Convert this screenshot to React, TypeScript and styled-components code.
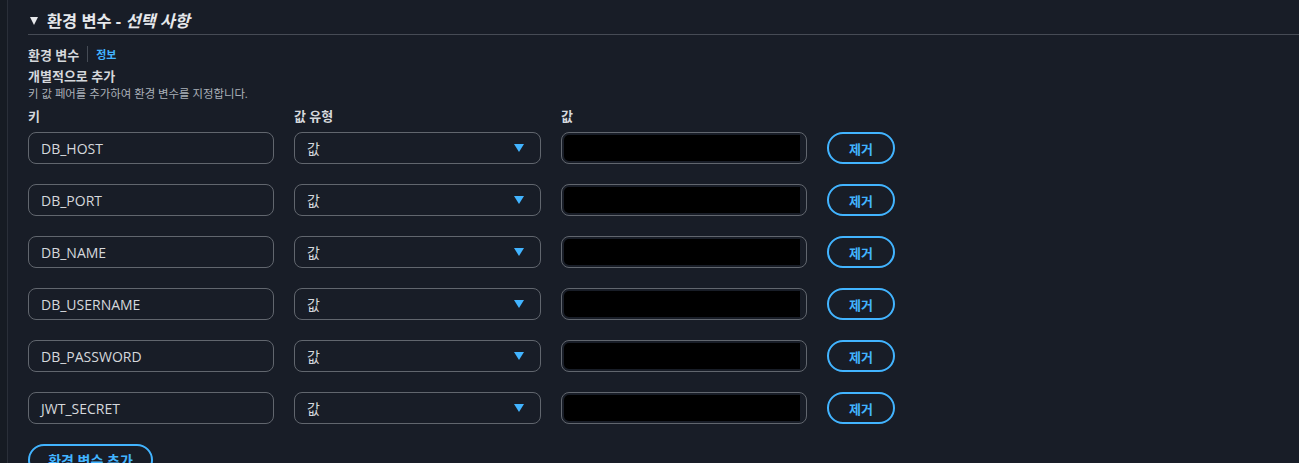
import React from "react";
import styled, { createGlobalStyle } from "styled-components";

const Global = createGlobalStyle`
  html, body { margin: 0; padding: 0; background: #161b23; }
  body { font-family: "Open Sans", "Noto Sans CJK KR", sans-serif; color: #d1d5db; }
  * { box-sizing: border-box; }
`;

const Page = styled.div`
  width: 1299px;
  height: 463px;
  overflow: hidden;
  background: #161b23;
  padding-left: 7px;
`;

const Panel = styled.div`
  height: 100%;
  background: #181d27;
  border-left: 1px solid #2a2f39;
  padding: 9px 0 0 20px;
`;

const Header = styled.div`
  display: flex;
  align-items: center;
  gap: 9px;
  height: 26px;
  padding-left: 2px;
  border-bottom: 1px solid #464b55;
`;

const Caret = styled.span`
  width: 0;
  height: 0;
  border-left: 4.5px solid transparent;
  border-right: 4.5px solid transparent;
  border-top: 8px solid #e6e8eb;
  margin-bottom: 2px;
`;

const Title = styled.h2`
  margin: 0 0 3px;
  font-size: 16.4px;
  font-weight: 700;
  color: #e6e8eb;
  em { font-weight: 700; }
`;

const Body = styled.div`
  padding-top: 9px;
`;

const LabelRow = styled.div`
  display: flex;
  align-items: center;
  height: 20px;
`;

const Label = styled.span`
  font-size: 13px;
  font-weight: 700;
  color: #d5d8dc;
`;

const Sep = styled.span`
  width: 1px;
  height: 16px;
  background: #454b55;
  margin: 0 8px;
`;

const Info = styled.a`
  font-size: 11px;
  font-weight: 700;
  color: #42b4ff;
`;

const SubTitle = styled.div`
  margin-top: 2px;
  font-size: 13px;
  font-weight: 700;
  color: #d5d8dc;
  line-height: 20px;
`;

const Desc = styled.div`
  font-size: 11.4px;
  color: #aab0b8;
  line-height: 16px;
`;

const Grid = styled.div`
  display: grid;
  grid-template-columns: 246px 247px 246px 68px;
  column-gap: 20px;
  row-gap: 20px;
  align-items: center;
  margin-top: 5px;
`;

const ColLabel = styled.div`
  font-size: 13px;
  font-weight: 700;
  color: #d5d8dc;
  line-height: 18px;
  margin-bottom: -13px;
`;

const Field = styled.div`
  height: 32px;
  border: 1px solid #61666e;
  border-radius: 8px;
  display: flex;
  align-items: center;
  padding: 0 12px;
  font-size: 14px;
  color: #d5d8dc;
`;

const SelectField = styled(Field)`
  justify-content: space-between;
`;

const SelArrow = styled.span`
  width: 0;
  height: 0;
  border-left: 5.5px solid transparent;
  border-right: 5.5px solid transparent;
  border-top: 8px solid #42b4ff;
  margin-right: 4px;
`;

const ValueField = styled(Field)`
  padding: 2px 6px 2px 2px;
  align-items: stretch;
`;

const Redact = styled.div`
  flex: 1;
  background: #000;
  border-radius: 5px 0 0 5px;
`;

const PillButton = styled.button`
  height: 32px;
  border: 2px solid #42b4ff;
  border-radius: 20px;
  background: transparent;
  color: #42b4ff;
  font-family: inherit;
  font-size: 13px;
  font-weight: 700;
  padding: 0 18px;
  cursor: pointer;
`;

const AddButton = styled(PillButton)`
  margin-top: 20px;
  width: 125px;
  font-size: 14px;
`;

const rows = ["DB_HOST", "DB_PORT", "DB_NAME", "DB_USERNAME", "DB_PASSWORD", "JWT_SECRET"];

export default function App() {
  return (
    <>
      <Global />
      <Page>
        <Panel>
          <Header>
            <Caret />
            <Title>
              환경 변수 - <em>선택 사항</em>
            </Title>
          </Header>
          <Body>
            <LabelRow>
              <Label>환경 변수</Label>
              <Sep />
              <Info>정보</Info>
            </LabelRow>
            <SubTitle>개별적으로 추가</SubTitle>
            <Desc>키 값 페어를 추가하여 환경 변수를 지정합니다.</Desc>
            <Grid>
              <ColLabel>키</ColLabel>
              <ColLabel>값 유형</ColLabel>
              <ColLabel>값</ColLabel>
              <div />
              {rows.map((k) => (
                <React.Fragment key={k}>
                  <Field>{k}</Field>
                  <SelectField>
                    값
                    <SelArrow />
                  </SelectField>
                  <ValueField>
                    <Redact />
                  </ValueField>
                  <PillButton>제거</PillButton>
                </React.Fragment>
              ))}
            </Grid>
            <AddButton>환경 변수 추가</AddButton>
          </Body>
        </Panel>
      </Page>
    </>
  );
}
